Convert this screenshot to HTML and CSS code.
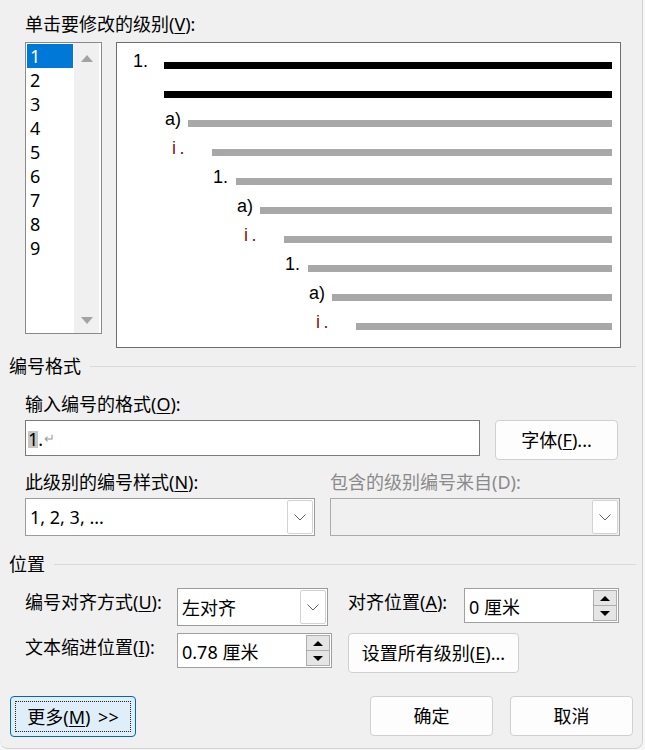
FILE: index.html
```html
<!DOCTYPE html>
<html lang="zh-CN">
<head>
<meta charset="utf-8">
<title>定义新多级列表</title>
<link rel="stylesheet" href="styles.css">
</head>
<body>
<div class="win">
  <div class="title">单击要修改的级别(<u>V</u>):</div>
  <div class="top">
    <div class="listbox">
      <div class="items">
        <div class="item sel">1</div>
        <div class="item">2</div>
        <div class="item">3</div>
        <div class="item">4</div>
        <div class="item">5</div>
        <div class="item">6</div>
        <div class="item">7</div>
        <div class="item">8</div>
        <div class="item">9</div>
      </div>
      <div class="vscroll"><span class="arr up"></span><span class="arr down"></span></div>
    </div>
    <div class="preview">
      <div class="prow i1"><span class="num">1.</span><span class="bar black"></span></div>
      <div class="prow i2"><span class="bar black"></span></div>
      <div class="prow i3"><span class="num">a)</span><span class="bar"></span></div>
      <div class="prow i4"><span class="num roman">i&#8201;.</span><span class="bar"></span></div>
      <div class="prow i5"><span class="num">1.</span><span class="bar"></span></div>
      <div class="prow i6"><span class="num">a)</span><span class="bar"></span></div>
      <div class="prow i7"><span class="num roman">i&#8201;.</span><span class="bar"></span></div>
      <div class="prow i8"><span class="num">1.</span><span class="bar"></span></div>
      <div class="prow i9"><span class="num">a)</span><span class="bar"></span></div>
      <div class="prow i10"><span class="num roman">i&#8201;.</span><span class="bar"></span></div>
    </div>
  </div>

  <div class="sec sec1">编号格式</div>
  <div class="lbl lbl-o">输入编号的格式(<u>O</u>):</div>
  <div class="frow">
    <div class="input"><span class="hl">1</span>.<span class="ret">↵</span></div>
    <div class="btn font-btn">字体(<u>F</u>)...</div>
  </div>
  <div class="cols lbl-n">
    <div class="lbl2">此级别的编号样式(<u>N</u>):</div>
    <div class="lbl2 dis">包含的级别编号来自(D):</div>
  </div>
  <div class="cols sel-row">
    <div class="select">
      <span class="stext">1, 2, 3, ...</span>
      <span class="dd"><svg width="12" height="7" viewBox="0 0 12 7"><polyline points="0.5,0.5 6,6 11.5,0.5" fill="none" stroke="#5f5f5f" stroke-width="1"/></svg></span>
    </div>
    <div class="select disabled">
      <span class="stext"></span>
      <span class="dd"><svg width="12" height="7" viewBox="0 0 12 7"><polyline points="0.5,0.5 6,6 11.5,0.5" fill="none" stroke="#5f5f5f" stroke-width="1"/></svg></span>
    </div>
  </div>

  <div class="sec sec2">位置</div>
  <div class="pos">
    <div class="plbl">编号对齐方式(<u>U</u>):</div>
    <div class="select align-sel">
      <span class="stext">左对齐</span>
      <span class="dd"><svg width="12" height="7" viewBox="0 0 12 7"><polyline points="0.5,0.5 6,6 11.5,0.5" fill="none" stroke="#5f5f5f" stroke-width="1"/></svg></span>
    </div>
    <div class="plbl">对齐位置(<u>A</u>):</div>
    <div class="spinner">
      <span class="stext">0 厘米</span>
      <span class="spin"><span class="half"><span class="tri-up"></span></span><span class="half lower"><span class="tri-down"></span></span></span>
    </div>
    <div class="plbl">文本缩进位置(<u>I</u>):</div>
    <div class="spinner">
      <span class="stext">0.78 厘米</span>
      <span class="spin"><span class="half"><span class="tri-up"></span></span><span class="half lower"><span class="tri-down"></span></span></span>
    </div>
    <div class="btn all-btn">设置所有级别(<u>E</u>)...</div>
  </div>

  <div class="btns">
    <div class="btn more"><span class="focus">更多(<u>M</u>) &gt;&gt;</span></div>
    <div class="btn ok">确定</div>
    <div class="btn cancel">取消</div>
  </div>
</div>
</body>
</html>
```

FILE: styles.css
```css
* { box-sizing: border-box; }

html, body {
  margin: 0;
  padding: 0;
  background: #f6f6f6;
}

body {
  font-family: "Noto Sans", "Noto Sans CJK SC", sans-serif;
  font-size: 18px;
  color: #000;
}

u { text-decoration: underline; text-underline-offset: 2px; text-decoration-thickness: 1px; }

.win {
  width: 643px;
  height: 749px;
  background: #f0f0f0;
  border-right: 1px solid #d2d2d2;
  border-bottom: 1px solid #d2d2d2;
  border-radius: 0 0 8px 8px;
  overflow: hidden;
  padding-top: 12px;
}

.title {
  padding-left: 25px;
  line-height: 24px;
}

/* ---------- top row ---------- */
.top {
  display: flex;
  margin-top: 6px;
  padding-left: 25px;
}

.listbox {
  width: 77px;
  height: 292px;
  border: 1px solid #8a8a8a;
  background: #fff;
  display: flex;
  padding: 0 1px;
}

.items {
  width: 46px;
  padding-top: 1px;
}

.item {
  height: 24px;
  line-height: 24px;
  padding-left: 3px;
  font-size: 18px;
}

.item.sel {
  background: #0078d7;
  color: #fff;
}

.vscroll {
  width: 25px;
  margin-left: 1px;
  background: #f0f0f0;
  display: flex;
  flex-direction: column;
  justify-content: space-between;
  align-items: center;
  padding: 12px 0 9px;
}

.arr {
  width: 0;
  height: 0;
  border-left: 6px solid transparent;
  border-right: 6px solid transparent;
}
.arr.up { border-bottom: 7px solid #a3a3a3; }
.arr.down { border-top: 7px solid #a3a3a3; }

.preview {
  margin-left: 14px;
  width: 505px;
  height: 306px;
  border: 1px solid #6e6e6e;
  background: #fff;
  padding-right: 8px;
}

.prow {
  display: flex;
  align-items: flex-start;
  height: 29px;
}

.num {
  flex: none;
  margin-top: 9px;
  line-height: 18px;
  font-family: "Liberation Sans", Arial, sans-serif;
  font-size: 18px;
  white-space: nowrap;
}

.num.roman { color: #7d1414; }

.bar {
  flex: 1;
  height: 7px;
  margin-top: 19px;
  background: #a8a8a8;
}
.bar.black { background: #000; }

.i1 { padding-left: 16px; }
.i1 .num { width: 31px; }
.i2 { padding-left: 47px; }
.i3 { padding-left: 48px; }
.i3 .num { width: 23px; }
.i4 { padding-left: 55px; }
.i4 .num { width: 40px; }
.i5 { padding-left: 96px; }
.i5 .num { width: 23px; }
.i6 { padding-left: 120px; }
.i6 .num { width: 23px; }
.i7 { padding-left: 127px; }
.i7 .num { width: 40px; }
.i8 { padding-left: 168px; }
.i8 .num { width: 23px; }
.i9 { padding-left: 192px; }
.i9 .num { width: 23px; }
.i10 { padding-left: 199px; }
.i10 .num { width: 40px; }

/* ---------- sections ---------- */
.sec {
  display: flex;
  align-items: center;
  line-height: 24px;
  padding-left: 9px;
  padding-right: 6px;
}
.sec::after {
  content: "";
  flex: 1;
  height: 1px;
  background: #d9d9d9;
  margin-left: 9px;
}
.sec1 { margin-top: 6px; }
.sec2 { margin-top: 16px; }

.lbl {
  padding-left: 25px;
  line-height: 24px;
}
.lbl-o { margin-top: 14px; }

.frow {
  display: flex;
  align-items: flex-start;
  margin-top: 4px;
  padding-left: 25px;
  gap: 15px;
}

.input {
  width: 455px;
  height: 36px;
  border: 1px solid #7a7a7a;
  background: #fff;
  padding-left: 2px;
  line-height: 34px;
}

.hl {
  display: inline-block;
  background: #c6c6c6;
  line-height: 17px;
}

.ret {
  font-size: 13px;
  color: #a0a0a0;
  vertical-align: 3px;
  margin-left: 1px;
}

.btn {
  background: #fdfdfd;
  border: 1px solid #d0d0d0;
  border-radius: 4px;
  display: flex;
  align-items: center;
  justify-content: center;
  line-height: 24px;
}

.font-btn {
  width: 123px;
  height: 40px;
}

.cols {
  display: grid;
  grid-template-columns: 290px 290px;
  column-gap: 15px;
  padding-left: 25px;
}

.lbl-n { margin-top: 10px; }
.lbl2 { line-height: 24px; }
.lbl2.dis { color: #8a8a8a; }

.sel-row { margin-top: 4px; }

.select {
  height: 38px;
  border: 1px solid #9c9c9c;
  background: #fff;
  padding: 1px;
  display: flex;
  align-items: stretch;
}

.select.disabled {
  background: #f0f0f0;
  border-color: #ababab;
}

.stext {
  flex: 1;
  display: flex;
  align-items: center;
  padding-left: 3px;
  white-space: nowrap;
}

.dd {
  width: 26px;
  flex: none;
  border: 1px solid #d3d3d3;
  border-radius: 2px;
  background: #fff;
  display: flex;
  align-items: center;
  justify-content: center;
}

/* ---------- position grid ---------- */
.pos {
  display: grid;
  grid-template-columns: 152px 171px 116px 155px;
  grid-template-rows: 38px 40px;
  row-gap: 7px;
  margin-top: 12px;
  padding-left: 25px;
}

.plbl {
  line-height: 24px;
  margin-top: 2px;
  white-space: nowrap;
}

.align-sel { width: 151px; }

.spinner {
  width: 155px;
  height: 35px;
  border: 1px solid #a0a0a0;
  background: #fff;
  display: flex;
  align-items: stretch;
  padding: 1px;
}

.spin {
  width: 24px;
  flex: none;
  display: flex;
  flex-direction: column;
  border: 1px solid #adadad;
  background: #e5e5e5;
}

.half {
  flex: 1;
  display: flex;
  align-items: center;
  justify-content: center;
}
.half.lower { border-top: 1px solid #adadad; }

.tri-up, .tri-down {
  width: 0;
  height: 0;
  border-left: 5px solid transparent;
  border-right: 5px solid transparent;
}
.tri-up { border-bottom: 5px solid #000; }
.tri-down { border-top: 5px solid #000; }

.all-btn {
  grid-column: 3 / 5;
  width: 171px;
  height: 40px;
}

/* ---------- bottom buttons ---------- */
.btns {
  display: flex;
  align-items: flex-start;
  margin-top: 23px;
  padding-left: 10px;
  padding-right: 9px;
}

.more {
  width: 126px;
  height: 41px;
  border: 1px solid #0067c0;
  background: #e0eef9;
  padding: 4px;
}

.focus {
  display: flex;
  align-items: center;
  justify-content: center;
  width: 100%;
  height: 100%;
  border: 1px dotted #222;
  word-spacing: 3px;
}

.ok {
  width: 123px;
  height: 40px;
  margin-left: auto;
}

.cancel {
  width: 123px;
  height: 40px;
  margin-left: 17px;
}
```
